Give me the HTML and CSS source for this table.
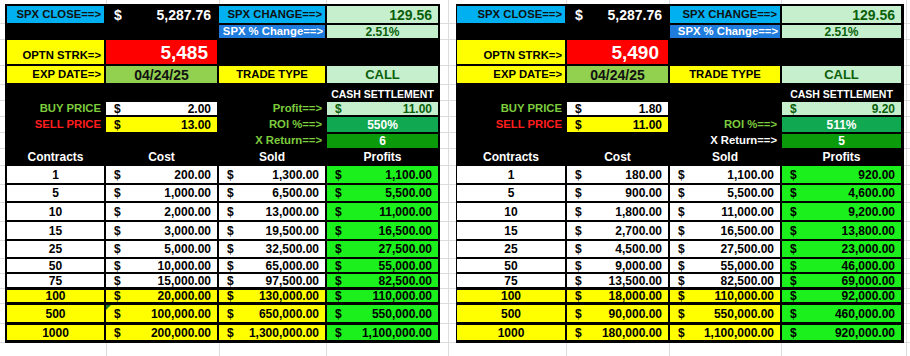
FILE: index.html
```html
<!DOCTYPE html>
<html>
<head>
<meta charset="utf-8">
<link rel="stylesheet" href="styles.css">
</head>
<body>
<div class="page">
  <div class="sheet sheet-a">
    <div class="c bl r">SPX CLOSE==&gt;</div>
    <div class="c m big-w"><span>$</span><span>5,287.76</span></div>
    <div class="c bl r">SPX CHANGE==&gt;</div>
    <div class="c lg r big-g">129.56</div>

    <div class="c"></div><div class="c"></div>
    <div class="c db r">SPX % Change==&gt;</div>
    <div class="c lg ctr pct">2.51%</div>

    <div class="c yl r bot">OPTN STRK=&gt;</div>
    <div class="c rd r strk">5,485</div>
    <div class="c"></div><div class="c"></div>

    <div class="c yl r">EXP DATE=&gt;</div>
    <div class="c ol ctr big-d">04/24/25</div>
    <div class="c yl ctr">TRADE TYPE</div>
    <div class="c lg ctr call">CALL</div>

    <div class="c"></div><div class="c"></div><div class="c"></div>
    <div class="c ctr cash">CASH SETTLEMENT</div>

    <div class="c r gtxt">BUY PRICE</div>
    <div class="c m wh"><span>$</span><span>2.00</span></div>
    <div class="c r gtxt">Profit==&gt;</div>
    <div class="c m lg dg"><span>$</span><span>11.00</span></div>

    <div class="c r rtxt">SELL PRICE</div>
    <div class="c m yl"><span>$</span><span>13.00</span></div>
    <div class="c r gtxt">ROI %==&gt;</div>
    <div class="c ctr roi">550%</div>

    <div class="c"></div><div class="c"></div>
    <div class="c r gtxt">X Return==&gt;</div>
    <div class="c ctr xr">6</div>

    <div class="c ctr hd">Contracts</div>
    <div class="c ctr hd">Cost</div>
    <div class="c ctr hd">Sold</div>
    <div class="c ctr hd">Profits</div>

    <div class="c ctr d">1</div><div class="c m d"><span>$</span><span>200.00</span></div><div class="c m d"><span>$</span><span>1,300.00</span></div><div class="c m d gr"><span>$</span><span>1,100.00</span></div>
    <div class="c ctr d">5</div><div class="c m d"><span>$</span><span>1,000.00</span></div><div class="c m d"><span>$</span><span>6,500.00</span></div><div class="c m d gr"><span>$</span><span>5,500.00</span></div>
    <div class="c ctr d">10</div><div class="c m d"><span>$</span><span>2,000.00</span></div><div class="c m d"><span>$</span><span>13,000.00</span></div><div class="c m d gr"><span>$</span><span>11,000.00</span></div>
    <div class="c ctr d">15</div><div class="c m d"><span>$</span><span>3,000.00</span></div><div class="c m d"><span>$</span><span>19,500.00</span></div><div class="c m d gr"><span>$</span><span>16,500.00</span></div>
    <div class="c ctr d">25</div><div class="c m d"><span>$</span><span>5,000.00</span></div><div class="c m d"><span>$</span><span>32,500.00</span></div><div class="c m d gr"><span>$</span><span>27,500.00</span></div>
    <div class="c ctr d">50</div><div class="c m d"><span>$</span><span>10,000.00</span></div><div class="c m d"><span>$</span><span>65,000.00</span></div><div class="c m d gr"><span>$</span><span>55,000.00</span></div>
    <div class="c ctr d">75</div><div class="c m d"><span>$</span><span>15,000.00</span></div><div class="c m d"><span>$</span><span>97,500.00</span></div><div class="c m d gr"><span>$</span><span>82,500.00</span></div>
    <div class="c ctr d y">100</div><div class="c m d y"><span>$</span><span>20,000.00</span></div><div class="c m d y"><span>$</span><span>130,000.00</span></div><div class="c m d y gr"><span>$</span><span>110,000.00</span></div>
    <div class="c ctr d y">500</div><div class="c m d y flag"><span>$</span><span>100,000.00</span></div><div class="c m d y"><span>$</span><span>650,000.00</span></div><div class="c m d y gr"><span>$</span><span>550,000.00</span></div>
    <div class="c ctr d y last">1000</div><div class="c m d y last"><span>$</span><span>200,000.00</span></div><div class="c m d y last"><span>$</span><span>1,300,000.00</span></div><div class="c m d y gr last"><span>$</span><span>1,100,000.00</span></div>
  </div>

  <div class="sheet sheet-b">
    <div class="c bl r">SPX CLOSE==&gt;</div>
    <div class="c m big-w"><span>$</span><span>5,287.76</span></div>
    <div class="c bl r">SPX CHANGE==&gt;</div>
    <div class="c lg r big-g">129.56</div>

    <div class="c"></div><div class="c"></div>
    <div class="c db r">SPX % Change==&gt;</div>
    <div class="c lg ctr pct">2.51%</div>

    <div class="c yl r bot">OPTN STRK=&gt;</div>
    <div class="c rd r strk">5,490</div>
    <div class="c"></div><div class="c"></div>

    <div class="c yl r">EXP DATE=&gt;</div>
    <div class="c ol ctr big-d">04/24/25</div>
    <div class="c yl ctr">TRADE TYPE</div>
    <div class="c lg ctr call">CALL</div>

    <div class="c"></div><div class="c"></div><div class="c"></div>
    <div class="c ctr cash">CASH SETTLEMENT</div>

    <div class="c r gtxt">BUY PRICE</div>
    <div class="c m wh"><span>$</span><span>1.80</span></div>
    <div class="c r hid">Profit==&gt;</div>
    <div class="c m lg dg"><span>$</span><span>9.20</span></div>

    <div class="c r rtxt">SELL PRICE</div>
    <div class="c m yl"><span>$</span><span>11.00</span></div>
    <div class="c r gtxt">ROI %==&gt;</div>
    <div class="c ctr roi">511%</div>

    <div class="c"></div><div class="c"></div>
    <div class="c r wtxt">X Return==&gt;</div>
    <div class="c ctr xr">5</div>

    <div class="c ctr hd">Contracts</div>
    <div class="c ctr hd">Cost</div>
    <div class="c ctr hd">Sold</div>
    <div class="c ctr hd">Profits</div>

    <div class="c ctr d">1</div><div class="c m d"><span>$</span><span>180.00</span></div><div class="c m d"><span>$</span><span>1,100.00</span></div><div class="c m d gr"><span>$</span><span>920.00</span></div>
    <div class="c ctr d">5</div><div class="c m d"><span>$</span><span>900.00</span></div><div class="c m d"><span>$</span><span>5,500.00</span></div><div class="c m d gr"><span>$</span><span>4,600.00</span></div>
    <div class="c ctr d">10</div><div class="c m d"><span>$</span><span>1,800.00</span></div><div class="c m d"><span>$</span><span>11,000.00</span></div><div class="c m d gr"><span>$</span><span>9,200.00</span></div>
    <div class="c ctr d">15</div><div class="c m d"><span>$</span><span>2,700.00</span></div><div class="c m d"><span>$</span><span>16,500.00</span></div><div class="c m d gr"><span>$</span><span>13,800.00</span></div>
    <div class="c ctr d">25</div><div class="c m d"><span>$</span><span>4,500.00</span></div><div class="c m d"><span>$</span><span>27,500.00</span></div><div class="c m d gr"><span>$</span><span>23,000.00</span></div>
    <div class="c ctr d">50</div><div class="c m d"><span>$</span><span>9,000.00</span></div><div class="c m d"><span>$</span><span>55,000.00</span></div><div class="c m d gr"><span>$</span><span>46,000.00</span></div>
    <div class="c ctr d">75</div><div class="c m d"><span>$</span><span>13,500.00</span></div><div class="c m d"><span>$</span><span>82,500.00</span></div><div class="c m d gr"><span>$</span><span>69,000.00</span></div>
    <div class="c ctr d y">100</div><div class="c m d y"><span>$</span><span>18,000.00</span></div><div class="c m d y"><span>$</span><span>110,000.00</span></div><div class="c m d y gr"><span>$</span><span>92,000.00</span></div>
    <div class="c ctr d y">500</div><div class="c m d y"><span>$</span><span>90,000.00</span></div><div class="c m d y"><span>$</span><span>550,000.00</span></div><div class="c m d y gr"><span>$</span><span>460,000.00</span></div>
    <div class="c ctr d y last">1000</div><div class="c m d y last"><span>$</span><span>180,000.00</span></div><div class="c m d y last"><span>$</span><span>1,100,000.00</span></div><div class="c m d y gr last"><span>$</span><span>920,000.00</span></div>
  </div>
</div>
</body>
</html>
```

FILE: styles.css
```css
html, body {
  margin: 0;
  padding: 0;
}
body {
  width: 910px;
  height: 356px;
  overflow: hidden;
  background-color: #ffffff;
  background-repeat: no-repeat;
  background-image:
    linear-gradient(#dcdcdc, #dcdcdc), linear-gradient(#dcdcdc, #dcdcdc),
    linear-gradient(#dcdcdc, #dcdcdc), linear-gradient(#dcdcdc, #dcdcdc),
    linear-gradient(#dcdcdc, #dcdcdc), linear-gradient(#dcdcdc, #dcdcdc),
    linear-gradient(#dcdcdc, #dcdcdc), linear-gradient(#dcdcdc, #dcdcdc),
    linear-gradient(#dcdcdc, #dcdcdc), linear-gradient(#dcdcdc, #dcdcdc),
    linear-gradient(#dcdcdc, #dcdcdc), linear-gradient(#dcdcdc, #dcdcdc),
    linear-gradient(#dcdcdc, #dcdcdc), linear-gradient(#dcdcdc, #dcdcdc),
    linear-gradient(#dcdcdc, #dcdcdc), linear-gradient(#dcdcdc, #dcdcdc),
    linear-gradient(#dcdcdc, #dcdcdc), linear-gradient(#dcdcdc, #dcdcdc),
    linear-gradient(#dcdcdc, #dcdcdc),
    linear-gradient(#dcdcdc, #dcdcdc), linear-gradient(#dcdcdc, #dcdcdc),
    linear-gradient(#dcdcdc, #dcdcdc), linear-gradient(#dcdcdc, #dcdcdc),
    linear-gradient(#dcdcdc, #dcdcdc), linear-gradient(#dcdcdc, #dcdcdc),
    linear-gradient(#dcdcdc, #dcdcdc), linear-gradient(#dcdcdc, #dcdcdc);
  background-size:
    100% 1px, 100% 1px, 100% 1px, 100% 1px, 100% 1px, 100% 1px, 100% 1px,
    100% 1px, 100% 1px, 100% 1px, 100% 1px, 100% 1px, 100% 1px, 100% 1px,
    100% 1px, 100% 1px, 100% 1px, 100% 1px, 100% 1px,
    1px 100%, 1px 100%, 1px 100%, 1px 100%, 1px 100%, 1px 100%, 1px 100%, 1px 100%;
  background-position:
    0 23px, 0 39px, 0 65px, 0 84px, 0 100px, 0 116px, 0 132px, 0 148px,
    0 165px, 0 184px, 0 202px, 0 221px, 0 240px, 0 258px, 0 273px, 0 288px,
    0 303px, 0 323px, 0 342px,
    106px 0, 219px 0, 326px 0, 448px 0, 566px 0, 669px 0, 781px 0, 906px 0;
}

.page {
  display: flex;
  align-items: flex-start;
  gap: 16px;
  padding: 4px 0 0 5px;
}

.sheet {
  display: grid;
  background: #000;
  column-gap: 2px;
  row-gap: 2px;
  padding: 2px;
  grid-template-rows: 17px 13px 24px 17px 15px 13px 15px 14px 14px
    17px 16px 17px 17px 16px 13px 13px 13px 18px 17px;
  font-family: "Liberation Sans", Arial, sans-serif;
}
.sheet-a {
  grid-template-columns: 97px 111px 106px 111px;
}
.sheet-b {
  padding: 2px 3px 2px 1px;
  grid-template-columns: 108px 101px 110px 119px;
}

.c {
  display: flex;
  align-items: center;
  padding: 0 3px;
  font-size: 11.3px;
  font-weight: bold;
  color: #000;
  white-space: nowrap;
  overflow: hidden;
  line-height: 1;
}
.r { justify-content: flex-end; }
.ctr { justify-content: center; }
.m {
  justify-content: space-between;
  padding: 0 6px 0 8px;
  font-size: 12px;
}
.bot { align-items: flex-end; padding-bottom: 3px; }

.bl { background: #00b0f0; color: #111; }
.db { background: #1f7bdc; color: #fff; padding-right: 2px; }
.lg { background: #c6efce; color: #0b5f0b; }
.yl { background: #ffff00; }
.rd { background: #ff0000; color: #fff; }
.ol { background: #92d050; color: #111; }
.wh { background: #fff; }

.big-w { color: #fff; font-size: 14px; }
.big-g { font-size: 14px; padding-right: 6px; }
.big-d { font-size: 14px; }
.pct { font-size: 12px; font-weight: bold; }
.call { font-size: 13px; }
.strk { font-size: 19px; padding-right: 9px; }
.cash { color: #fff; font-size: 10.5px; align-items: flex-end; padding: 0 4px 1px; }
.dg { color: #0b5f0b; }

.gtxt { color: #7ccc3c; }
.rtxt { color: #ff1c1c; }
.wtxt { color: #fff; }
.hid { color: #000; }

.roi { background: #10a850; color: #fff; font-size: 12px; }
.xr { background: #0a9a0a; color: #fff; font-size: 12px; }

.hd { color: #fff; font-size: 12px; }

.d { background: #fff; font-size: 12px; }
.d.y { background: #ffff00; border-top: 1px solid #000; }
.d.gr { background: #1cf01c; }
.d.last { border-bottom: 1px solid #000; }

.flag { position: relative; }
.flag::before {
  content: "";
  position: absolute;
  left: 0;
  top: 0;
  border-top: 5px solid #1e7a1e;
  border-right: 5px solid transparent;
}
```
